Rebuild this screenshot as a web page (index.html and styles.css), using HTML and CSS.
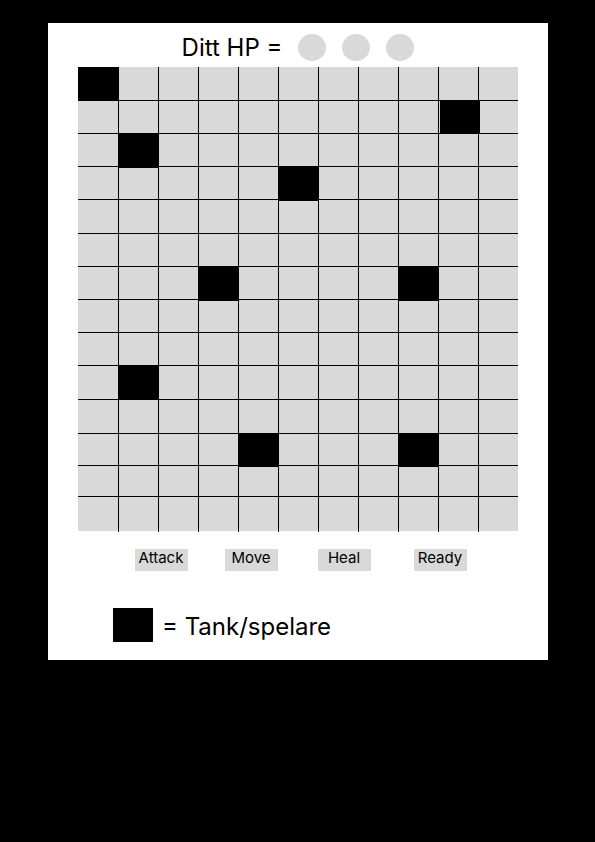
FILE: index.html
```html
<!DOCTYPE html>
<html lang="sv">
<head>
<meta charset="utf-8">
<meta name="viewport" content="width=device-width, initial-scale=1">
<title>Tank</title>
<link rel="stylesheet" href="styles.css">
</head>
<body>
<main class="card">
  <header class="status">
    <h1 class="label">Ditt HP =</h1>
    <div class="lives">
      <span class="life"></span>
      <span class="life"></span>
      <span class="life"></span>
    </div>
  </header>

  <section class="board" id="board"></section>

  <div class="actions">
    <button class="action" type="button">Attack</button>
    <button class="action" type="button">Move</button>
    <button class="action" type="button">Heal</button>
    <button class="action" type="button">Ready</button>
  </div>

  <footer class="legend">
    <span class="swatch"></span>
    <p class="label">= Tank/spelare</p>
  </footer>
</main>
<script src="board.js"></script>
</body>
</html>
```
FILE: styles.css
```css
* {
  box-sizing: border-box;
}

body {
  margin: 0;
  padding: 23px 47px 23px 48px;
  background: #000;
  color: #000;
  font-family: Inter, "Liberation Sans", sans-serif;
}

.card {
  padding: 10px 30px 18px;
  background: #fff;
}

.label {
  margin: 0;
  font-size: 24px;
  font-weight: 400;
  line-height: 30px;
}

.status {
  display: flex;
  justify-content: center;
  align-items: flex-start;
  gap: 16px;
  height: 34px;
}

.lives {
  display: flex;
  gap: 16px;
  padding-top: 1px;
}

.life {
  width: 28px;
  height: 27px;
  border-radius: 50%;
  background: #d9d9d9;
}

.board {
  display: grid;
  grid-template-columns: repeat(11, 1fr);
  grid-template-rows: 33px 33px 33px 33px 34px 33px 33px 33px 33px 34px 34px 32px 31px 35px;
  background: #d9d9d9;
}

.cell {
  border: 0 solid #000;
}

.cell.lined-left {
  border-left-width: 1px;
}

.cell.lined-top {
  border-top-width: 1px;
}

/* Column lines run just past the bottom edge of the board. */
.cell.last-row {
  margin-bottom: -1px;
}

.tank {
  height: 34px;
  margin: 1px -1px 0 0;
  background: #000;
}

.tank.flush {
  margin-top: 0;
}

.tank.inset {
  margin: 0 -2px 0 2px;
}

.actions {
  display: grid;
  grid-template-columns: 90px 93px 96px 53px;
  padding: 18px 0 0 57px;
}

.action {
  width: 53px;
  height: 22px;
  padding: 0 1px 4px 0;
  border: 0;
  background: #d9d9d9;
  color: #000;
  font: 400 15px/18px Inter, "Liberation Sans", sans-serif;
  white-space: nowrap;
}

.legend {
  display: flex;
  align-items: center;
  gap: 9px;
  padding: 37px 0 0 35px;
}

.swatch {
  width: 40px;
  height: 34px;
  background: #000;
}

.legend .label {
  height: 34px;
  padding-top: 4px;
}
```
FILE: board.js
```js
const COLUMNS = 11;
const ROWS = 14;

const tanks = [
  { column: 1, row: 1, style: "flush" },
  { column: 10, row: 2, style: "inset" },
  { column: 2, row: 3 },
  { column: 6, row: 4 },
  { column: 4, row: 7 },
  { column: 9, row: 7 },
  { column: 2, row: 10 },
  { column: 5, row: 12, style: "flush" },
  { column: 9, row: 12, style: "flush" }
];

const board = document.getElementById("board");

function place(className, column, row) {
  const item = document.createElement("div");
  item.className = className;
  item.style.gridColumn = column;
  item.style.gridRow = row;
  board.append(item);
}

for (let row = 1; row <= ROWS; row++) {
  for (let column = 1; column <= COLUMNS; column++) {
    const classes = ["cell"];
    if (column > 1) classes.push("lined-left");
    if (row > 1) classes.push("lined-top");
    if (row === ROWS) classes.push("last-row");
    place(classes.join(" "), column, row);
  }
}

for (const tank of tanks) {
  place(["tank", tank.style || ""].join(" ").trim(), tank.column, tank.row);
}
```
